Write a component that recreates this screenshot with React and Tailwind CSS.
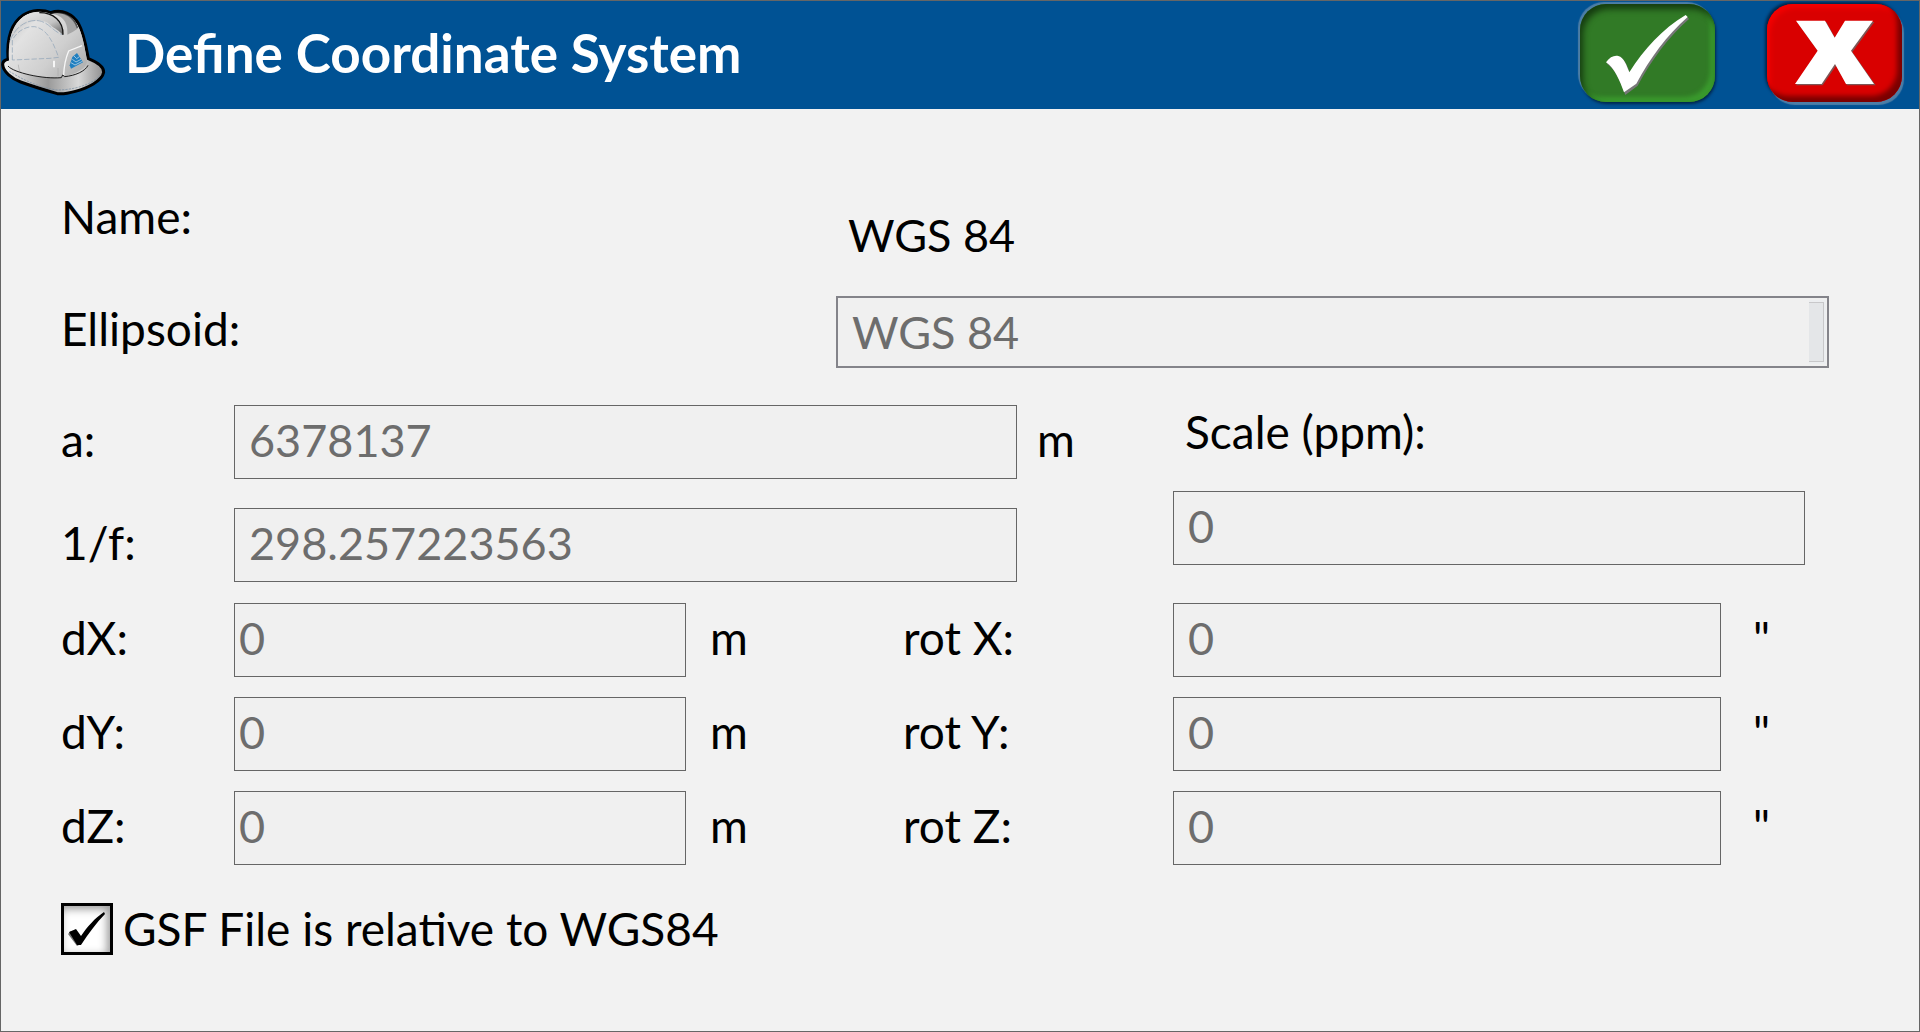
import React, { useState } from 'react';

// Shared column tracks, so the fields of every block line up
const COLS = 'grid grid-cols-[173px_minmax(0,452fr)_150px_67px_114px_156px_minmax(0,548fr)_84px_24px_30px]';
const LABEL = 'h-[74px] pb-1 flex items-center whitespace-nowrap';
const FIELD = 'block w-full min-w-0 h-[74px] pb-1 border border-[#666] bg-[#f0f0f0] text-[45px] text-[#6d6d6d]';

const SHIFT_ROWS = [
    { axis: 'X', shift: '0', rotation: '0' },
    { axis: 'Y', shift: '0', rotation: '0' },
    { axis: 'Z', shift: '0', rotation: '0' }
];

function HardHat() {
    return (
        <svg viewBox="3 3 324 324" className="w-27 h-27 shrink-0" aria-hidden="true">
            <defs>
                <linearGradient id="shell" x1="0" y1="0" x2="1" y2="0.7">
                    <stop offset="0" stopColor="#bdbdbd" />
                    <stop offset="0.3" stopColor="#e2e2e2" />
                    <stop offset="0.7" stopColor="#cfcfcf" />
                    <stop offset="1" stopColor="#b4b4b4" />
                </linearGradient>
                <linearGradient id="brim" x1="0" y1="0" x2="1" y2="0">
                    <stop offset="0" stopColor="#f2f2f2" />
                    <stop offset="0.45" stopColor="#9a9a9a" />
                    <stop offset="0.75" stopColor="#d8d8d8" />
                    <stop offset="1" stopColor="#8e8e8e" />
                </linearGradient>
                <linearGradient id="ridge" x1="0" y1="0" x2="1" y2="1">
                    <stop offset="0" stopColor="#f0f0f0" />
                    <stop offset="0.6" stopColor="#c4c4c4" />
                    <stop offset="1" stopColor="#555" />
                </linearGradient>
            </defs>
            <path
                d="M24 178 C20 120 32 70 70 45 C95 28 130 28 152 38 C185 26 220 42 236 72 C252 100 258 140 265 176 C290 186 312 200 311 217 C306 244 262 264 226 274 C205 280 188 283 172 281 C140 272 95 258 62 246 C36 237 10 216 8 194 C8 184 14 180 24 178 Z"
                fill="url(#brim)"
                stroke="#000"
                strokeWidth="9"
                strokeLinejoin="round"
            />
            <path
                d="M27 180 C24 122 35 74 72 49 C96 32 130 32 152 42 C185 31 216 46 232 75 C248 102 254 142 261 184 C262 205 225 224 190 230 C130 238 45 222 30 200 Z"
                fill="url(#shell)"
            />
            <path d="M72 49 C96 34 128 34 150 44 C176 56 190 80 189 106 C180 92 160 84 150 74 C125 50 70 60 38 110 C44 80 54 62 72 49 Z" fill="url(#ridge)" />
            <path d="M118 38 C160 38 190 62 189 104 M152 40 C196 30 222 54 232 84" fill="none" stroke="#111" strokeWidth="4" />
            <path d="M160 42 C196 50 204 76 202 104 C222 94 232 88 234 84 C220 46 190 34 160 42 Z" fill="#8f8f8f" opacity="0.65" />
            <path d="M30 122 C48 74 90 54 124 64 C146 70 158 92 186 104" fill="none" stroke="#8ba0b5" strokeWidth="2" strokeDasharray="22 5" />
            <path d="M37 180 V120 C52 92 80 78 104 80 C144 88 160 130 176 172 L150 175 Z" fill="none" stroke="#8ba0b5" strokeWidth="2" strokeDasharray="16 6" />
            <path d="M55 194 C56 205 58 212 62 218 M174 204 V228" fill="none" stroke="#aaa" strokeWidth="2" />
            <path d="M162 182 V202" stroke="#fff" strokeWidth="5" />
            <path d="M191 226 C192 196 198 172 206 153 L246 137" fill="none" stroke="#f7f7f7" strokeWidth="4" />
            <path d="M24 198 C40 218 130 238 184 233 L188 225 L194 230 C225 227 256 214 264 196" fill="none" stroke="#1c1c1c" strokeWidth="3" />
            <path d="M28 214 C70 240 120 264 172 270 C220 270 280 254 304 222" fill="none" stroke="#768ca3" strokeWidth="2" strokeDasharray="7 3" />
            {/* maker's badge */}
            <path d="M231 159 L249 187 L213 206 L209 196 L217 171 Z" fill="#1f7fc0" />
            <path d="M222 168 L230 176 L238 170 M217 178 L228 186 L243 178 M213 188 L225 195 L247 184" fill="none" stroke="#dfe7ee" strokeWidth="2" />
        </svg>
    );
}

export default function DefineCoordinateSystem() {
    const [relative, setRelative] = useState(true);

    return (
        <div className="min-h-screen flex flex-col border border-[#666] bg-[#f2f2f2] text-black text-[46px] leading-[54px] font-['Lato',sans-serif]">
            <header className="flex items-center h-27 bg-[#005294] pr-[17px]">
                <HardHat />
                <h1 className="flex-1 pl-4 pb-1 text-[53px] font-bold text-white whitespace-nowrap">Define Coordinate System</h1>
                <div className="flex self-start gap-[52px] pt-[3px]">
                    <button
                        type="button"
                        aria-label="Accept"
                        className="w-[135px] h-[98px] rounded-[26px] bg-[#317a26] shadow-[inset_3px_5px_6px_#153c10,inset_-5px_-5px_4px_#3a9a2d,-2px_-2px_1px_#4d7ea6,1px_2px_3px_#00264a]"
                    >
                        <svg viewBox="60 9 405 294" className="w-full h-full">
                            <path d="M141 188 C152 171 166 165 178 168 C194 172 202 196 211 218 C255 148 310 88 380 46 L387 54 C325 108 274 178 233 254 L196 282 C184 246 166 204 141 188 Z" fill="#777" />
                            <path d="M138 184 C149 168 163 162 175 165 C192 169 200 194 208 214 C252 144 307 84 377 42 L383 48 C321 102 270 172 229 248 L192 274 C180 240 163 200 138 184 Z" fill="#fff" />
                        </svg>
                    </button>
                    <button
                        type="button"
                        aria-label="Cancel"
                        className="w-[135px] h-[98px] rounded-[26px] bg-[#d90000] shadow-[inset_-5px_-6px_5px_#7a0000,inset_3px_4px_5px_#f40000,2px_3px_1px_#4d7ea6,-2px_-2px_3px_#00264a]"
                    >
                        <svg viewBox="82 9 405 294" className="w-full h-full">
                            <path d="M172 63 H260 L288 114 L319 63 H404 L338 153 L408 253 H322 L289 194 L249 253 H169 L237 153 Z" fill="#7e5555" />
                            <path d="M169 59 H256 L285 110 L316 59 H400 L334 149 L403 249 H319 L286 189 L246 249 H166 L234 149 Z" fill="#fff" />
                        </svg>
                    </button>
                </div>
            </header>

            <main className="px-15 pt-[73px] pb-8">
                <div className={`${COLS} gap-y-5`}>
                    <label htmlFor="name" className={`${LABEL} col-span-3`}>Name:</label>
                    <input id="name" readOnly defaultValue="WGS 84" className="col-start-4 col-end-10 mt-[18px] h-[74px] pb-1 pl-3 min-w-0 bg-transparent text-[45px] outline-none" />

                    <label htmlFor="ellipsoid" className={`${LABEL} col-span-3`}>Ellipsoid:</label>
                    <div className="relative col-start-4 col-end-10 self-end">
                        <select id="ellipsoid" disabled className="block appearance-none w-full h-18 pl-3.5 border-2 border-[#84848a] bg-[#f0f0f0] text-[45px] text-[#6d6d6d] opacity-100">
                            <option>WGS 84</option>
                        </select>
                        <span className="absolute right-[3px] top-1 bottom-1 w-[17px] border-y-2 border-r-2 border-[#eceef0] bg-[#e4e6e8] shadow-[inset_-1px_1px_0_#c8c8ca,inset_0_-1px_0_#c8c8ca]" />
                    </div>
                </div>

                <div className={`${COLS} gap-y-[29px] mt-[37px]`}>
                    <label htmlFor="axis" className={LABEL}>a:</label>
                    <input id="axis" disabled defaultValue="6378137" className={`${FIELD} col-start-2 col-end-6 pl-3.5`} />
                    <span className={`${LABEL} pl-5`}>m</span>

                    <div className="col-start-7 col-end-9 row-start-1 row-span-2">
                        <label htmlFor="scale" className="block h-14 mb-[30px] pl-3 whitespace-nowrap">Scale (ppm):</label>
                        <input id="scale" disabled defaultValue="0" className={`${FIELD} pl-3.5`} />
                    </div>

                    <label htmlFor="flattening" className={`${LABEL} col-start-1`}>1/f:</label>
                    <input id="flattening" disabled defaultValue="298.257223563" className={`${FIELD} col-start-2 col-end-6 pl-3.5`} />
                </div>

                <div className={`${COLS} gap-y-5 mt-[21px]`}>
                    {SHIFT_ROWS.map(({ axis, shift, rotation }) => (
                        <React.Fragment key={axis}>
                            <label htmlFor={`d${axis}`} className={LABEL}>{`d${axis}:`}</label>
                            <input id={`d${axis}`} disabled defaultValue={shift} className={`${FIELD} pl-1`} />
                            <span className={`${LABEL} col-span-2 pl-6`}>m</span>
                            <label htmlFor={`rot${axis}`} className={`${LABEL} col-span-2`}>{`rot ${axis}:`}</label>
                            <input id={`rot${axis}`} disabled defaultValue={rotation} className={`${FIELD} pl-3.5`} />
                            <span className={`${LABEL} col-span-3 pl-8`}>"</span>
                        </React.Fragment>
                    ))}
                </div>

                <label className="flex items-center gap-2.5 mt-[37px]">
                    <span className="relative flex shrink-0">
                        <input
                            type="checkbox"
                            checked={relative}
                            onChange={(e) => setRelative(e.target.checked)}
                            className="peer appearance-none w-13 h-13 border-3 border-black bg-white shadow-[inset_-3px_3px_8px_#999]"
                        />
                        <svg viewBox="0 0 52 52" className="absolute inset-0 hidden peer-checked:block pointer-events-none">
                            <path d="M7 31 L10 28 L20 41 L16 43 Z" fill="#777" />
                            <path d="M8 29 L15 26 L20 33 C26 24 34 15 43 9 L44 11 C35 20 28 30 20 42 L16 42 Z" fill="#000" />
                        </svg>
                    </span>
                    <span>GSF File is relative to WGS84</span>
                </label>
            </main>
        </div>
    );
}
